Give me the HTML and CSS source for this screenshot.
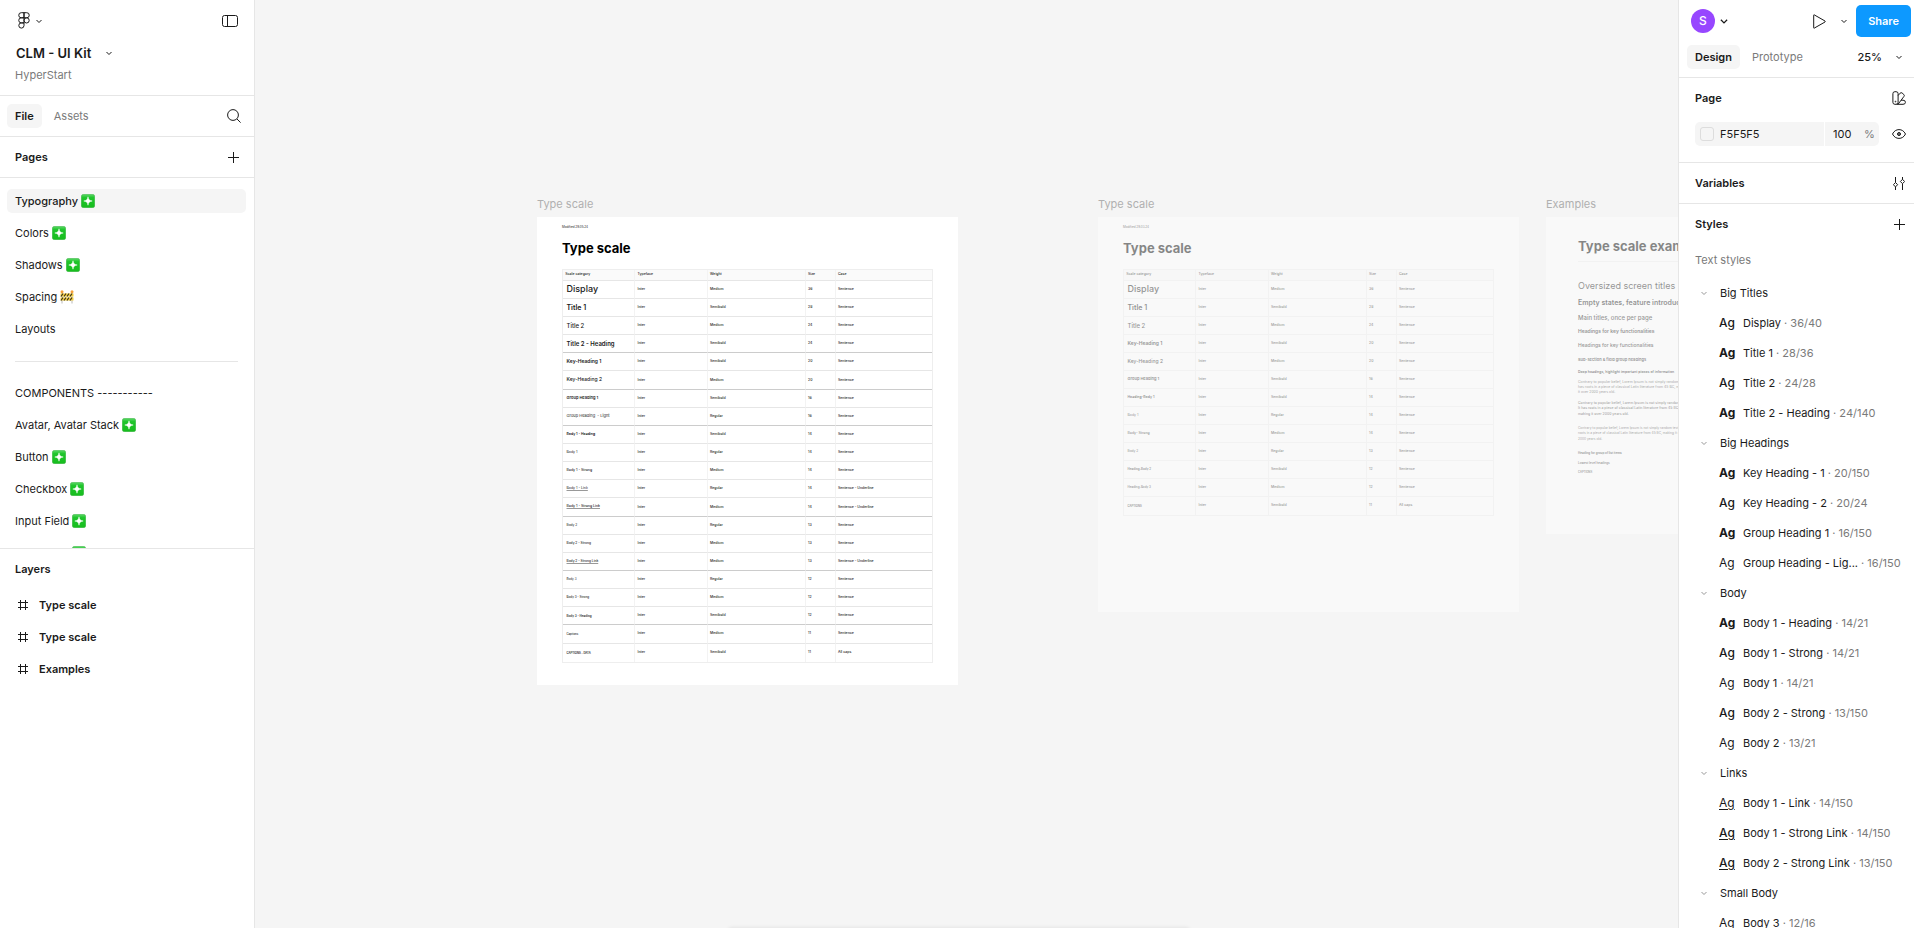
FILE: index.html
```html
<!DOCTYPE html>
<html lang="en">
<head>
    <meta charset="UTF-8">
    <meta name="viewport" content="width=device-width, initial-scale=1.0">
    <title>CLM - UI Kit</title>
    <link rel="stylesheet" href="styles.css">
</head>
<body>
    <!-- Shared icons -->
    <svg class="sprite" width="0" height="0" aria-hidden="true">
        <defs>
            <linearGradient id="greenFill" x1="0" y1="0" x2="0" y2="1">
                <stop offset="0" stop-color="#5fd86a"/>
                <stop offset="0.25" stop-color="#1fc52c"/>
                <stop offset="1" stop-color="#17bd1d"/>
            </linearGradient>
        </defs>
        <symbol id="chevron" viewBox="0 0 8 8"><path d="M1.5 3 4 5.5 6.5 3" fill="none" stroke="currentColor"/></symbol>
        <symbol id="plus" viewBox="0 0 12 12"><path d="M6.5 1v11M1 6.5h11" fill="none" stroke="currentColor"/></symbol>
        <symbol id="frame" viewBox="0 0 10 10"><path d="M2.5 0v10M7.5 0v10M0 2.5h10M0 7.5h10" fill="none" stroke="currentColor"/></symbol>
        <symbol id="sparkle" viewBox="0 0 14 14">
            <rect x="0.25" y="0.25" width="13.5" height="13.5" rx="2.5" fill="url(#greenFill)" stroke="#3fae47" stroke-width="0.5"/>
            <path d="M7 2.8C7.4 5.6 8.4 6.6 11.2 7 8.4 7.4 7.4 8.4 7 11.2 6.6 8.4 5.6 7.4 2.8 7 5.6 6.6 6.6 5.6 7 2.8z" fill="#fff" stroke="#fff" stroke-width="0.5"/>
        </symbol>
        <symbol id="barrier" viewBox="0 0 14 14">
            <path d="M2 3v10.5M12 3v10.5" stroke="#b9b9b9" fill="none"/>
            <rect x="0.5" y="3.5" width="13" height="3" fill="#f5cf3c"/>
            <rect x="0.5" y="7.5" width="13" height="3" fill="#f5cf3c"/>
            <path d="M1 6.5l2-3M4 6.5l2-3M7 6.5l2-3M10 6.5l2-3M1 10.5l2-3M4 10.5l2-3M7 10.5l2-3M10 10.5l2-3" stroke="#3a3220" stroke-width="1.2" fill="none"/>
            <circle cx="2" cy="1.8" r="1.5" fill="#f6a13a"/>
            <circle cx="12" cy="1.8" r="1.5" fill="#f6a13a"/>
        </symbol>
    </svg>

    <div class="app">
        <aside class="sidebar">
            <header class="file-header">
                <div class="file-bar">
                    <button class="icon-btn menu-btn" aria-label="Main menu">
                        <svg width="12" height="17" viewBox="0 0 12 17" fill="none" stroke="currentColor">
                            <path d="M6 .7H3.3a2.5 2.5 0 0 0 0 5.1H6zM6 .7h2.7a2.5 2.5 0 0 1 0 5.1H6zM6 5.8H3.3a2.5 2.5 0 0 0 0 5.1H6zM6 10.9H3.3A2.6 2.6 0 1 0 6 13.6z"/>
                            <circle cx="8.6" cy="8.4" r="2.6"/>
                        </svg>
                        <svg class="chevron" width="8" height="8"><use href="#chevron"/></svg>
                    </button>
                    <button class="icon-btn" aria-label="Toggle sidebar">
                        <svg width="16" height="12" viewBox="0 0 16 12" fill="none" stroke="currentColor"><rect x=".5" y=".5" width="15" height="11" rx="2"/><path d="M5.5 .5v11"/></svg>
                    </button>
                </div>
                <button class="file-name">CLM - UI Kit <svg class="chevron" width="8" height="8"><use href="#chevron"/></svg></button>
                <a class="project" href="#">HyperStart</a>
            </header>

            <nav class="side-tabs">
                <button class="tab active">File</button>
                <button class="tab">Assets</button>
                <button class="icon-btn push" aria-label="Search">
                    <svg width="14" height="14" viewBox="0 0 14 14" fill="none" stroke="currentColor"><circle cx="6" cy="6" r="5.4"/><path d="M10 10l3.6 3.6"/></svg>
                </button>
            </nav>

            <div class="section-head">
                <h2>Pages</h2>
                <button class="icon-btn" aria-label="Add page"><svg width="12" height="12"><use href="#plus"/></svg></button>
            </div>

            <div class="pages">
                <a class="page active" href="#">Typography <svg width="14" height="14"><use href="#sparkle"/></svg></a>
                <a class="page" href="#">Colors <svg width="14" height="14"><use href="#sparkle"/></svg></a>
                <a class="page" href="#">Shadows <svg width="14" height="14"><use href="#sparkle"/></svg></a>
                <a class="page" href="#">Spacing <svg width="14" height="14"><use href="#barrier"/></svg></a>
                <a class="page" href="#">Layouts</a>
                <hr>
                <a class="page" href="#">COMPONENTS -----------</a>
                <a class="page" href="#">Avatar, Avatar Stack <svg width="14" height="14"><use href="#sparkle"/></svg></a>
                <a class="page" href="#">Button <svg width="14" height="14"><use href="#sparkle"/></svg></a>
                <a class="page" href="#">Checkbox <svg width="14" height="14"><use href="#sparkle"/></svg></a>
                <a class="page" href="#">Input Field <svg width="14" height="14"><use href="#sparkle"/></svg></a>
                <a class="page" href="#">Dropdown <svg width="14" height="14"><use href="#sparkle"/></svg></a>
            </div>

            <section class="layers">
                <h2>Layers</h2>
                <a class="layer" href="#"><svg width="10" height="10"><use href="#frame"/></svg>Type scale</a>
                <a class="layer" href="#"><svg width="10" height="10"><use href="#frame"/></svg>Type scale</a>
                <a class="layer" href="#"><svg width="10" height="10"><use href="#frame"/></svg>Examples</a>
            </section>
        </aside>

        <main class="canvas">
            <div class="artboard board-current">
                <div class="artboard-name">Type scale</div>
                <div class="sheet">
                    <p class="modified">Modified 29.05.24</p>
                    <h1>Type scale</h1>
                    <table class="scale scale-full">
                        <thead>
                            <tr><th>Scale category</th><th>Typeface</th><th>Weight</th><th>Size</th><th>Case</th></tr>
                        </thead>
                        <tbody>
                            <tr><td class="t36">Display</td><td>Inter</td><td>Medium</td><td>36</td><td>Sentence</td></tr>
                            <tr><td class="t28 semi">Title 1</td><td>Inter</td><td>Semibold</td><td>28</td><td>Sentence</td></tr>
                            <tr><td class="t24">Title 2</td><td>Inter</td><td>Medium</td><td>24</td><td>Sentence</td></tr>
                            <tr class="last"><td class="t24 semi">Title 2 - Heading</td><td>Inter</td><td>Semibold</td><td>24</td><td>Sentence</td></tr>
                            <tr><td class="t20 semi">Key-Heading 1</td><td>Inter</td><td>Semibold</td><td>20</td><td>Sentence</td></tr>
                            <tr class="last"><td class="t20">Key-Heading 2</td><td>Inter</td><td>Medium</td><td>20</td><td>Sentence</td></tr>
                            <tr><td class="t16 semi">Group Heading 1</td><td>Inter</td><td>Semibold</td><td>16</td><td>Sentence</td></tr>
                            <tr class="last"><td class="t16 regular">Group Heading  - Light</td><td>Inter</td><td>Regular</td><td>16</td><td>Sentence</td></tr>
                            <tr><td class="t14 semi">Body 1 - Heading</td><td>Inter</td><td>Semibold</td><td>14</td><td>Sentence</td></tr>
                            <tr><td class="t14 regular">Body 1</td><td>Inter</td><td>Regular</td><td>14</td><td>Sentence</td></tr>
                            <tr><td class="t14">Body 1 - Strong</td><td>Inter</td><td>Medium</td><td>14</td><td>Sentence</td></tr>
                            <tr><td class="t14 regular underline">Body 1 - Link</td><td>Inter</td><td>Regular</td><td>14</td><td>Sentence - Underline</td></tr>
                            <tr class="last"><td class="t14 underline">Body 1 - Strong Link</td><td>Inter</td><td>Medium</td><td>14</td><td>Sentence - Underline</td></tr>
                            <tr><td class="t13 regular">Body 2</td><td>Inter</td><td>Regular</td><td>13</td><td>Sentence</td></tr>
                            <tr><td class="t13">Body 2 - Strong</td><td>Inter</td><td>Medium</td><td>13</td><td>Sentence</td></tr>
                            <tr class="last"><td class="t13 underline">Body 2 - Strong Link</td><td>Inter</td><td>Medium</td><td>13</td><td>Sentence - Underline</td></tr>
                            <tr><td class="t12 regular">Body 3</td><td>Inter</td><td>Regular</td><td>12</td><td>Sentence</td></tr>
                            <tr><td class="t12">Body 3 - Strong</td><td>Inter</td><td>Medium</td><td>12</td><td>Sentence</td></tr>
                            <tr class="last"><td class="t12 semi">Body 3 - Heading</td><td>Inter</td><td>Semibold</td><td>12</td><td>Sentence</td></tr>
                            <tr><td class="t11">Captions</td><td>Inter</td><td>Medium</td><td>11</td><td>Sentence</td></tr>
                            <tr><td class="t11 semi">CAPTIONS - DATA</td><td>Inter</td><td>Semibold</td><td>11</td><td>All caps</td></tr>
                        </tbody>
                    </table>
                </div>
            </div>

            <div class="artboard board-old">
                <div class="artboard-name">Type scale</div>
                <div class="sheet faded">
                    <p class="modified">Modified 29.03.24</p>
                    <h1>Type scale</h1>
                    <table class="scale">
                        <thead>
                            <tr><th>Scale category</th><th>Typeface</th><th>Weight</th><th>Size</th><th>Case</th></tr>
                        </thead>
                        <tbody>
                            <tr><td class="t36">Display</td><td>Inter</td><td>Medium</td><td>36</td><td>Sentence</td></tr>
                            <tr><td class="t28 semi">Title 1</td><td>Inter</td><td>Semibold</td><td>28</td><td>Sentence</td></tr>
                            <tr><td class="t24">Title 2</td><td>Inter</td><td>Medium</td><td>24</td><td>Sentence</td></tr>
                            <tr><td class="t20 semi">Key-Heading 1</td><td>Inter</td><td>Semibold</td><td>20</td><td>Sentence</td></tr>
                            <tr><td class="t20">Key-Heading 2</td><td>Inter</td><td>Medium</td><td>20</td><td>Sentence</td></tr>
                            <tr><td class="t16 semi">Group Heading 1</td><td>Inter</td><td>Semibold</td><td>16</td><td>Sentence</td></tr>
                            <tr><td class="t14 semi">Heading-Body 1</td><td>Inter</td><td>Semibold</td><td>14</td><td>Sentence</td></tr>
                            <tr><td class="t14 regular">Body 1</td><td>Inter</td><td>Regular</td><td>14</td><td>Sentence</td></tr>
                            <tr><td class="t14">Body- Strong</td><td>Inter</td><td>Medium</td><td>14</td><td>Sentence</td></tr>
                            <tr><td class="t13 regular">Body 2</td><td>Inter</td><td>Regular</td><td>13</td><td>Sentence</td></tr>
                            <tr><td class="t12 semi">Heading-Body 2</td><td>Inter</td><td>Semibold</td><td>12</td><td>Sentence</td></tr>
                            <tr><td class="t12">Heading-Body 3</td><td>Inter</td><td>Medium</td><td>12</td><td>Sentence</td></tr>
                            <tr><td class="t11 semi">CAPTIONS</td><td>Inter</td><td>Semibold</td><td>11</td><td>All caps</td></tr>
                        </tbody>
                    </table>
                </div>
            </div>

            <div class="artboard board-examples">
                <div class="artboard-name">Examples</div>
                <div class="sheet examples faded">
                    <h1>Type scale examples</h1>
                    <p class="t36">Oversized screen titles</p>
                    <p class="t28 semi">Empty states, feature introductions</p>
                    <p class="t24">Main titles, once per page</p>
                    <p class="t20 semi">Headings for key functionalities</p>
                    <p class="t20">Headings for key functionalities</p>
                    <p class="t16 semi">Sub-section &amp; field group headings</p>
                    <p class="t14 semi tight">Deep headings, highlight important pieces of information</p>
                    <p class="t14 regular para">Contrary to popular belief, Lorem Ipsum is not simply random text. It<br>has roots in a piece of classical Latin literature from 45 BC, making<br>it over 2000 years old.</p>
                    <p class="t14 para loose">Contrary to popular belief, Lorem Ipsum is not simply random text.<br>It has roots in a piece of classical Latin literature from 45 BC,<br>making it over 2000 years old.</p>
                    <p class="t13 regular para loose">Contrary to popular belief, Lorem Ipsum is not simply random text. It has<br>roots in a piece of classical Latin literature from 45 BC, making it over<br>2000 years old.</p>
                    <p class="t12 semi note">Heading for group of list items</p>
                    <p class="t12 note">Lowest level headings</p>
                    <p class="t11 note">CAPTIONS</p>
                </div>
            </div>
        </main>

        <aside class="inspector">
            <div class="user-bar">
                <button class="icon-btn user" aria-label="Account"><span class="avatar">S</span><svg class="chevron" width="10" height="10"><use href="#chevron"/></svg></button>
                <button class="icon-btn play push" aria-label="Present">
                    <svg width="13" height="15" viewBox="0 0 13 15" fill="none" stroke="currentColor" stroke-linejoin="round"><path d="M.7 1.2v12.6q0 .6.6.3L12 8q.5-.5 0-1L1.3.9q-.6-.3-.6.3z"/></svg>
                </button>
                <button class="icon-btn" aria-label="Present options"><svg class="chevron" width="8" height="8"><use href="#chevron"/></svg></button>
                <button class="share">Share</button>
            </div>
            <div class="mode-bar">
                <button class="tab active">Design</button>
                <button class="tab">Prototype</button>
                <button class="zoom push">25% <svg class="chevron" width="8" height="8"><use href="#chevron"/></svg></button>
            </div>

            <section class="panel page-panel">
                <div class="panel-head">
                    <h2>Page</h2>
                    <button class="icon-btn" aria-label="Apply styles">
                        <svg width="14" height="14" viewBox="0 0 14 14" fill="none" stroke="currentColor"><rect x=".9" y=".7" width="5.2" height="12.6" rx="2"/><path d="M6.1 4.5l2-2.3q1-1 2-.2l1.700 1.5q1 1 .1 2L6 13.300M9 9.2h2q2.4 0 2.4 2v.2q0 1.9-2.4 1.900H4.5"/><circle cx="3.5" cy="10.6" r=".4"/></svg>
                    </button>
                </div>
                <div class="fill-row">
                    <div class="fill-field">
                        <span class="swatch"></span>
                        <input class="hex" type="text" value="F5F5F5" aria-label="Page colour">
                        <input class="opacity" type="text" value="100" aria-label="Opacity">
                        <span class="percent">%</span>
                    </div>
                    <button class="icon-btn" aria-label="Toggle visibility">
                        <svg width="14" height="10" viewBox="0 0 14 10" fill="none" stroke="currentColor"><path d="M.5 5C2 2 4.3.6 7 .6S12 2 13.5 5C12 8 9.7 9.4 7 9.4S2 8 .5 5z"/><circle cx="7" cy="5" r="1.5" fill="#777"/></svg>
                    </button>
                </div>
            </section>

            <section class="panel">
                <div class="panel-head">
                    <h2>Variables</h2>
                    <button class="icon-btn" aria-label="Open variables">
                        <svg width="12" height="13" viewBox="0 0 12 13" fill="none" stroke="currentColor"><path d="M2.5 0v5.5M2.5 10v3M9.5 0v2.5M9.5 7v6"/><path d="M2.5 5.5 4.6 7.7 2.5 9.9.4 7.7zM9.5 2.3l2.1 2.2-2.1 2.2-2.1-2.2z"/></svg>
                    </button>
                </div>
            </section>

            <section class="panel styles">
                <div class="panel-head">
                    <h2>Styles</h2>
                    <button class="icon-btn" aria-label="Add style"><svg width="12" height="12"><use href="#plus"/></svg></button>
                </div>
                <h3>Text styles</h3>

                <button class="group"><svg width="8" height="8"><use href="#chevron"/></svg>Big Titles</button>
                <a class="style" href="#"><span class="ag">Ag</span><span class="name">Display</span><span class="spec"> · 36/40</span></a>
                <a class="style" href="#"><span class="ag semi">Ag</span><span class="name">Title 1</span><span class="spec"> · 28/36</span></a>
                <a class="style" href="#"><span class="ag">Ag</span><span class="name">Title 2</span><span class="spec"> · 24/28</span></a>
                <a class="style" href="#"><span class="ag semi">Ag</span><span class="name">Title 2 - Heading</span><span class="spec"> · 24/140</span></a>

                <button class="group"><svg width="8" height="8"><use href="#chevron"/></svg>Big Headings</button>
                <a class="style" href="#"><span class="ag semi">Ag</span><span class="name">Key Heading - 1</span><span class="spec"> · 20/150</span></a>
                <a class="style" href="#"><span class="ag">Ag</span><span class="name">Key Heading - 2</span><span class="spec"> · 20/24</span></a>
                <a class="style" href="#"><span class="ag semi">Ag</span><span class="name">Group Heading 1</span><span class="spec"> · 16/150</span></a>
                <a class="style" href="#"><span class="ag regular">Ag</span><span class="name">Group Heading - Lig...</span><span class="spec"> · 16/150</span></a>

                <button class="group"><svg width="8" height="8"><use href="#chevron"/></svg>Body</button>
                <a class="style" href="#"><span class="ag semi">Ag</span><span class="name">Body 1 - Heading</span><span class="spec"> · 14/21</span></a>
                <a class="style" href="#"><span class="ag">Ag</span><span class="name">Body 1 - Strong</span><span class="spec"> · 14/21</span></a>
                <a class="style" href="#"><span class="ag regular">Ag</span><span class="name">Body 1</span><span class="spec"> · 14/21</span></a>
                <a class="style" href="#"><span class="ag">Ag</span><span class="name">Body 2 - Strong</span><span class="spec"> · 13/150</span></a>
                <a class="style" href="#"><span class="ag regular">Ag</span><span class="name">Body 2</span><span class="spec"> · 13/21</span></a>

                <button class="group"><svg width="8" height="8"><use href="#chevron"/></svg>Links</button>
                <a class="style" href="#"><span class="ag regular underline">Ag</span><span class="name">Body 1 - Link</span><span class="spec"> · 14/150</span></a>
                <a class="style" href="#"><span class="ag underline">Ag</span><span class="name">Body 1 - Strong Link</span><span class="spec"> · 14/150</span></a>
                <a class="style" href="#"><span class="ag underline">Ag</span><span class="name">Body 2 - Strong Link</span><span class="spec"> · 13/150</span></a>

                <button class="group"><svg width="8" height="8"><use href="#chevron"/></svg>Small Body</button>
                <a class="style" href="#"><span class="ag regular">Ag</span><span class="name">Body 3</span><span class="spec"> · 12/16</span></a>
            </section>
        </aside>
    </div>
</body>
</html>
```
FILE: styles.css
```css
* {
    box-sizing: border-box;
}
body {
    margin: 0;
    font-family: Inter, sans-serif;
    font-size: 11px;
    line-height: 16px;
    color: #1a1a1a;
    background: #fff;
}
h1, h2, h3, p {
    margin: 0;
}
h2 {
    font-size: 11px;
    font-weight: 600;
    line-height: 16px;
}
a {
    color: inherit;
    text-decoration: none;
}
button {
    margin: 0;
    padding: 0;
    border: none;
    background: none;
    font: inherit;
    color: inherit;
    cursor: pointer;
}
svg {
    flex: none;
}
.sprite {
    position: absolute;
}
.app {
    display: flex;
    height: 100vh;
    overflow: hidden;
}
.icon-btn {
    display: flex;
    align-items: center;
    justify-content: center;
}
.push {
    margin-left: auto;
}
.chevron {
    color: #1a1a1a;
}
.semi {
    font-weight: 600;
}
.regular {
    font-weight: 400;
}
.underline {
    text-decoration: underline;
}

/* Left sidebar */
.sidebar {
    display: flex;
    flex-direction: column;
    flex: none;
    width: 255px;
    border-right: 1px solid #e6e6e6;
}
.file-header {
    display: flex;
    flex-direction: column;
    align-items: flex-start;
    height: 96px;
    padding: 12px 16px 0 15px;
    border-bottom: 1px solid #e6e6e6;
}
.file-bar {
    display: flex;
    justify-content: space-between;
    align-self: stretch;
    height: 17px;
    padding-left: 3px;
}
.menu-btn {
    gap: 5px;
}
.file-name {
    display: flex;
    align-items: center;
    gap: 14px;
    height: 24px;
    margin-top: 12px;
    padding-left: 1px;
    font-size: 13px;
    font-weight: 600;
}
.project {
    margin-top: 2px;
    color: #7a7a7a;
}
.side-tabs {
    display: flex;
    align-items: center;
    height: 41px;
    padding: 0 13px 0 7px;
    border-bottom: 1px solid #e6e6e6;
}
.tab {
    height: 24px;
    margin-right: 4px;
    padding: 0 8px;
    border-radius: 5px;
    color: #7a7a7a;
}
.tab.active {
    background: #f5f5f5;
    color: #1a1a1a;
    font-weight: 600;
}
.section-head {
    display: flex;
    align-items: center;
    justify-content: space-between;
    height: 41px;
    padding: 0 15px;
    border-bottom: 1px solid #e6e6e6;
}
.pages {
    height: 371px;
    padding: 11px 8px 0 7px;
    overflow: hidden;
    border-bottom: 1px solid #e6e6e6;
}
.page {
    display: flex;
    align-items: center;
    gap: 3px;
    height: 24px;
    margin-bottom: 8px;
    padding: 0 8px;
    border-radius: 5px;
}
.page.active {
    background: #f5f5f5;
    font-weight: 500;
}
.pages hr {
    height: 1px;
    margin: 20px 8px 19px;
    border: none;
    background: #e6e6e6;
}
.layers {
    padding: 12px 15px;
}
.layers h2 {
    margin-bottom: 16px;
}
.layer {
    display: flex;
    align-items: center;
    gap: 11px;
    height: 24px;
    margin-bottom: 8px;
    padding-left: 3px;
    font-weight: 600;
}

/* Canvas, artboards are shown at 25% */
.canvas {
    position: relative;
    flex: 1;
    min-width: 0;
    overflow: hidden;
    background: #f5f5f5;
}
/* Shadow of the toolbar docked under the canvas */
.canvas::after {
    content: "";
    position: absolute;
    top: 100%;
    left: 50%;
    width: 460px;
    height: 40px;
    margin-left: -238px;
    box-shadow: 0 0 4px rgba(0, 0, 0, 0.1);
}
.artboard {
    position: absolute;
    top: 196px;
}
.board-current {
    left: 282px;
}
.board-old {
    left: 843px;
}
.board-examples {
    left: 1291px;
}
.artboard-name {
    height: 21px;
    font-size: 11px;
    color: #b0b0b0;
}
.sheet {
    zoom: 0.25;
    width: 1684px;
    padding: 32px 100px 88px;
    background: #fff;
}
.faded {
    min-height: 1580px;
    opacity: 0.45;
}
.modified {
    font-size: 12px;
    line-height: 16px;
}
.sheet h1 {
    margin: 38px 0 48px;
    font-size: 52px;
    font-weight: 700;
    line-height: 72px;
    color: #000;
}
.t36 { font-size: 36px; line-height: 40px; }
.t28 { font-size: 28px; line-height: 36px; }
.t24 { font-size: 24px; line-height: 28px; font-weight: 500; }
.t20 { font-size: 20px; line-height: 30px; font-weight: 500; }
.t16 { font-size: 16px; line-height: 24px; }
.t14 { font-size: 14px; line-height: 21px; font-weight: 500; }
.t13 { font-size: 13px; line-height: 21px; font-weight: 500; }
.t12 { font-size: 12px; line-height: 18px; font-weight: 500; }
.t11 { font-size: 11px; line-height: 16px; font-weight: 500; }
.sheet .semi { font-weight: 600; }
.sheet .regular { font-weight: 400; }
.scale {
    width: 100%;
    table-layout: fixed;
    border-collapse: separate;
    border-spacing: 0;
    border: 1px solid #eee;
    font-size: 14px;
    font-weight: 500;
    line-height: 20px;
}
.scale-full {
    height: 1578px;
}
.scale th {
    width: 290px;
    height: 45px;
    padding: 0 9px;
    background: #fafafa;
    border-bottom: 1px solid #e6e6e6;
    font-weight: 500;
    text-align: left;
}
.scale th:first-child {
    width: 285px;
}
.scale th:nth-child(3) {
    width: 392px;
}
.scale th:nth-child(4) {
    width: 120px;
}
.scale th:nth-child(5) {
    width: auto;
}
.scale td {
    height: 72px;
    padding: 0 9px;
    border-bottom: 1px solid #e6e6e6;
    white-space: pre;
}
.scale td:first-child {
    padding-left: 14px;
}
.scale tr > * + * {
    border-left: 1px solid #f3f3f3;
}
.scale .last td {
    border-bottom-color: #ccc;
}
.scale tr:last-child td {
    border-bottom: none;
}
.scale .underline {
    text-decoration-color: #999;
    text-underline-offset: 4px;
}
.faded .scale, .faded .scale th, .faded .scale td {
    border-color: #f0f0f0;
}
.examples {
    min-height: 1268px;
    padding: 64px 128px;
}
.examples h1 {
    margin: 16px 0 74px;
    padding-bottom: 24px;
    border-bottom: 1px solid #f0f0f0;
}
.examples p {
    margin-bottom: 28px;
    white-space: nowrap;
}
.examples .tight {
    margin-bottom: 20px;
}
.examples .para {
    margin-bottom: 22px;
    color: #444;
}
.examples .loose {
    margin-bottom: 37px;
}
.examples .note {
    margin-bottom: 20px;
}

/* Right inspector */
.inspector {
    display: flex;
    flex-direction: column;
    flex: none;
    width: 236px;
    border-left: 1px solid #e6e6e6;
    overflow: hidden;
}
.user-bar {
    display: flex;
    align-items: center;
    flex: none;
    height: 42px;
    padding: 0 3px 0 12px;
}
.user {
    gap: 4px;
}
.avatar {
    width: 24px;
    height: 24px;
    border-radius: 50%;
    background: #9747ff;
    color: #fff;
    font-size: 12px;
    font-weight: 500;
    line-height: 24px;
}
.play {
    margin-right: 14px;
}
.share {
    height: 32px;
    margin-left: 8px;
    padding: 0 12px;
    border-radius: 5px;
    background: #0d99ff;
    color: #fff;
    font-weight: 600;
}
.mode-bar {
    display: flex;
    align-items: center;
    flex: none;
    height: 36px;
    padding: 0 11px 6px 8px;
    border-bottom: 1px solid #e6e6e6;
}
.zoom {
    display: flex;
    align-items: center;
    gap: 13px;
    font-weight: 500;
}
.panel {
    flex: none;
    border-bottom: 1px solid #e6e6e6;
}
.panel-head {
    display: flex;
    align-items: center;
    justify-content: space-between;
    height: 40px;
    padding: 0 9px 0 16px;
}
.page-panel {
    height: 85px;
}
.page-panel .panel-head, .fill-row {
    padding-right: 8px;
}
.fill-row {
    display: flex;
    align-items: center;
    gap: 13px;
    height: 32px;
    padding-left: 16px;
}
.fill-field {
    display: flex;
    align-items: center;
    flex: 1;
    min-width: 0;
    height: 24px;
    padding-left: 5px;
    border-radius: 5px;
    background: #f5f5f5;
}
.swatch {
    flex: none;
    width: 14px;
    height: 14px;
    border: 1px solid #ddd;
    border-radius: 3px;
    background: #f5f5f5;
}
.fill-field input {
    height: 24px;
    padding: 0;
    border: none;
    background: none;
    font: inherit;
    color: inherit;
}
.fill-field .hex {
    flex: 1;
    min-width: 0;
    margin-left: 6px;
}
.fill-field .opacity {
    flex: none;
    width: 40px;
    padding-left: 8px;
    border-left: 1px solid #fff;
}
.percent {
    width: 15px;
    color: #7a7a7a;
}
.styles h3 {
    height: 34px;
    padding-left: 16px;
    font-size: 11px;
    font-weight: 400;
    line-height: 32px;
    color: #7a7a7a;
}
.group, .style {
    display: flex;
    align-items: center;
    height: 30px;
}
.group {
    gap: 12px;
    padding-left: 21px;
}
.group svg {
    color: #999;
}
.style {
    padding: 0 12px 0 40px;
    white-space: pre;
}
.ag {
    width: 24px;
    font-size: 12px;
    font-weight: 500;
    text-underline-offset: 2px;
}
.ag.semi {
    font-weight: 700;
}
.ag.regular {
    font-weight: 400;
}
.spec {
    color: #7a7a7a;
}
```
